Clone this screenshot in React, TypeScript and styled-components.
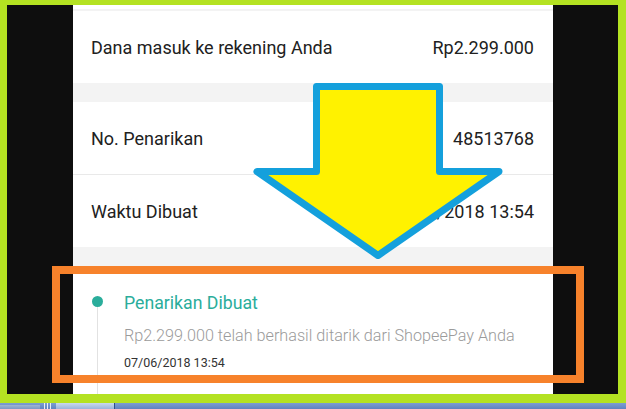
import styled, { createGlobalStyle } from 'styled-components';

const GlobalStyle = createGlobalStyle`
    html, body {
        margin: 0;
        padding: 0;
        background: #ffffff;
    }
    body {
        font-family: Roboto, 'Liberation Sans', Arial, sans-serif;
    }
`;

const colors = {
    lime: '#b4e222',
    black: '#0e0e0e',
    text: '#212121',
    band: '#f3f3f3',
    divider: '#e9e9e9',
    teal: '#2aad9b',
    muted: '#9b9b9b',
    arrowFill: '#fff200',
    arrowStroke: '#14a0dc',
    frame: '#f7822b',
};

const rows = [
    { label: 'No. Penarikan', value: '48513768', divider: true },
    { label: 'Waktu Dibuat', value: '07/06/2018 13:54', divider: false },
];

const App = () => {
    return (
        <>
            <GlobalStyle />
            <Screen>
                <Bezel>
                    <BlackPanel>
                        <Phone>
                            <Band $height={4} $white />
                            <Band $height={2} />
                            <InfoRow>
                                <Label>Dana masuk ke rekening Anda</Label>
                                <Value>Rp2.299.000</Value>
                            </InfoRow>
                            <Band $height={19} />
                            {rows.map((row) => (
                                <InfoRow key={row.label} $divider={row.divider}>
                                    <Label>{row.label}</Label>
                                    <Value>{row.value}</Value>
                                </InfoRow>
                            ))}
                            <Band $height={20} />
                            <Timeline>
                                <Rail>
                                    <Dot />
                                    <RailLine />
                                </Rail>
                                <Event>
                                    <EventTitle>Penarikan Dibuat</EventTitle>
                                    <EventText>
                                        Rp2.299.000 telah berhasil ditarik dari ShopeePay Anda
                                    </EventText>
                                    <EventDate>07/06/2018 13:54</EventDate>
                                </Event>
                            </Timeline>
                        </Phone>
                    </BlackPanel>
                </Bezel>
                <Taskbar>
                    <StartArea />
                    <QuickBars>
                        <span />
                        <span />
                        <span />
                    </QuickBars>
                    <WindowButton />
                </Taskbar>
                <Annotation viewBox='0 0 626 409' width='626' height='409'>
                    <polygon
                        points='316.5,86.5 439.5,86.5 439.5,171.5 499,171.5 378,255.5 257,171.5 316.5,171.5'
                        fill={colors.arrowFill}
                        stroke={colors.arrowStroke}
                        strokeWidth='7'
                        strokeLinejoin='round'
                    />
                    <rect
                        x='56'
                        y='270'
                        width='524'
                        height='109'
                        fill='none'
                        stroke={colors.frame}
                        strokeWidth='8'
                    />
                </Annotation>
            </Screen>
        </>
    );
};

const Screen = styled.div`
    position: relative;
    width: 626px;
    height: 409px;
    display: flex;
    flex-direction: column;
    background: ${colors.lime};
    overflow: hidden;
`;

const Bezel = styled.div`
    flex: 1;
    display: flex;
    min-height: 0;
    padding: 5px 8px 9px 7px;
`;

const BlackPanel = styled.div`
    flex: 1;
    display: flex;
    padding-left: 66px;
    background: ${colors.black};
`;

const Phone = styled.div`
    width: 480px;
    display: flex;
    flex-direction: column;
    background: #ffffff;
    overflow: hidden;
`;

const Band = styled.div<{ $height: number; $white?: boolean }>`
    flex: none;
    height: ${({ $height }) => $height}px;
    background: ${({ $white }) => ($white ? '#ffffff' : colors.band)};
`;

const InfoRow = styled.div<{ $divider?: boolean }>`
    flex: none;
    box-sizing: border-box;
    height: ${({ $divider }) => ($divider ? 73 : 72)}px;
    display: flex;
    align-items: center;
    justify-content: space-between;
    padding: 1px 19px 0 18px;
    border-bottom: ${({ $divider }) => ($divider ? `1px solid ${colors.divider}` : 'none')};
`;

const Label = styled.span`
    font-size: 18px;
    color: ${colors.text};
`;

const Value = styled(Label)``;

const Timeline = styled.div`
    flex: 1;
    display: flex;
    padding-top: 29px;
`;

const Rail = styled.div`
    width: 45px;
    display: flex;
    flex-direction: column;
    align-items: center;
    padding-left: 4px;
    box-sizing: border-box;
`;

const Dot = styled.div`
    width: 11px;
    height: 11px;
    border-radius: 50%;
    background: ${colors.teal};
    flex: none;
`;

const RailLine = styled.div`
    width: 1px;
    flex: 1;
    background: #e2e2e2;
`;

const Event = styled.div`
    display: flex;
    flex-direction: column;
    margin-left: 6px;
`;

const EventTitle = styled.div`
    font-size: 17.7px;
    line-height: 14px;
    color: ${colors.teal};
`;

const EventText = styled.div`
    margin-top: 18px;
    font-size: 16.2px;
    font-weight: 300;
    line-height: 16px;
    color: ${colors.muted};
    white-space: nowrap;
`;

const EventDate = styled.div`
    margin-top: 12px;
    font-size: 12.5px;
    line-height: 14px;
    color: #333333;
`;

const Taskbar = styled.div`
    flex: none;
    height: 6px;
    display: flex;
    align-items: stretch;
    background: linear-gradient(#7d9dd2, #5f83c0);
`;

const StartArea = styled.div`
    width: 40px;
    margin-top: 2px;
    background: linear-gradient(#9fb4d4, #7c98c6);
`;

const QuickBars = styled.div`
    display: flex;
    gap: 2px;
    margin: 0 3px 0 4px;

    & > span {
        width: 1px;
        background: #e8eef8;
    }
`;

const WindowButton = styled.div`
    width: 58px;
    margin-left: 2px;
    background: linear-gradient(#c9d8ee, #9ab4dc);
    border-right: 1px solid #2d4f8a;
`;

const Annotation = styled.svg`
    position: absolute;
    left: 0;
    top: 0;
    pointer-events: none;
`;

export default App;
